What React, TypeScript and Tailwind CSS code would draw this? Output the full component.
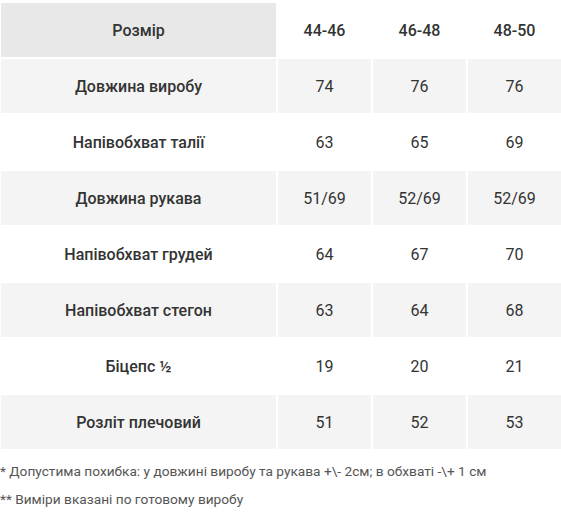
const sizes = ["44-46", "46-48", "48-50"];

const rows: [string, string[]][] = [
  ["Довжина виробу", ["74", "76", "76"]],
  ["Напівобхват талії", ["63", "65", "69"]],
  ["Довжина рукава", ["51/69", "52/69", "52/69"]],
  ["Напівобхват грудей", ["64", "67", "70"]],
  ["Напівобхват стегон", ["63", "64", "68"]],
  ["Біцепс ½", ["19", "20", "21"]],
  ["Розліт плечовий", ["51", "52", "53"]],
];

export default function App() {
  return (
    <div className="w-[561px] h-[521px] bg-white font-['Roboto',sans-serif] text-[#333] overflow-hidden">
      <div className="grid grid-cols-[275px_1fr_1fr_1fr] auto-rows-[54px] gap-[2px] pl-[1px] pt-[3px]">
        <div className="bg-[#e8e8e8] flex items-center justify-center pt-[1px] text-[16px] font-medium">Розмір</div>
        {sizes.map((s) => (
          <div key={s} className="bg-white flex items-center justify-center pt-[1px] text-[16px] font-medium">
            {s}
          </div>
        ))}
        {rows.map(([label, vals], i) => {
          const bg = i % 2 === 0 ? "bg-[#f4f4f4]" : "bg-white";
          return [
            <div key={label} className={`${bg} flex items-center justify-center pt-[1px] text-[16px] font-medium`}>
              {label}
            </div>,
            ...vals.map((v, j) => (
              <div key={label + j} className={`${bg} flex items-center justify-center pt-[1px] text-[16px]`}>
                {v}
              </div>
            )),
          ];
        })}
      </div>
      <div className="pt-[8px] text-[13.7px] text-[#555] leading-[28px]">
        <p>* Допустима похибка: у довжині виробу та рукава +\- 2см; в обхваті -\+ 1 см</p>
        <p>** Виміри вказані по готовому виробу</p>
      </div>
    </div>
  );
}
